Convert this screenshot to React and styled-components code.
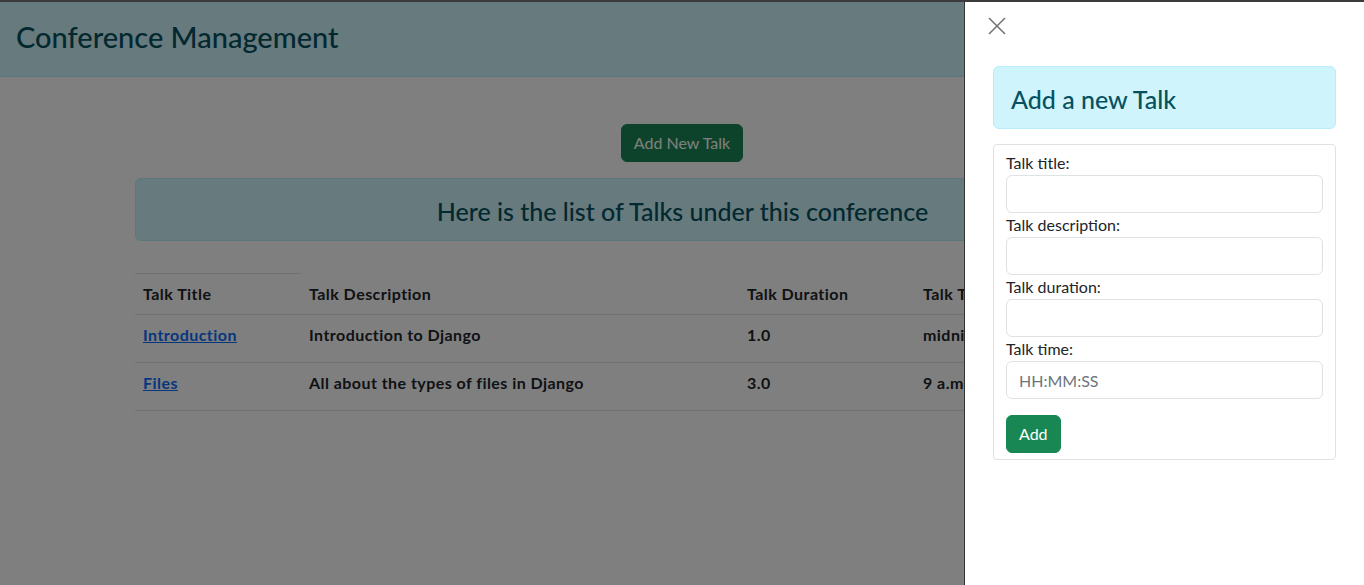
import styled, { createGlobalStyle } from "styled-components";

const GlobalStyle = createGlobalStyle`
    body {
        margin: 0;
        font-family: Lato, "Segoe UI", "Liberation Sans", sans-serif;
        font-size: 16px;
        line-height: 1.5;
        color: #212529;
        background: #fff;
    }
    * { box-sizing: border-box; }
`;

const TopLine = styled.div`
    position: fixed;
    top: 0;
    left: 0;
    right: 0;
    height: 2px;
    background: #3b3b3b;
    z-index: 30;
`;

const Header = styled.header`
    height: 77px;
    display: flex;
    align-items: center;
    padding: 0 16px 3px;
    background: #cff4fc;
    border-bottom: 1px solid #b6effb;
`;

const Brand = styled.h1`
    margin: 0;
    font-size: 29px;
    font-weight: 500;
    color: #055160;
`;

const Main = styled.main`
    width: calc(100% - 270px);
    margin: 0 auto;
    padding-top: 47px;
    display: flex;
    flex-direction: column;
    align-items: center;
`;

const Button = styled.button`
    font-family: inherit;
    font-size: 16px;
    line-height: 24px;
    color: #fff;
    background: #198754;
    border: 1px solid #198754;
    border-radius: 6px;
    padding: 6px 12px;
    cursor: pointer;
`;

const Alert = styled.div`
    width: 100%;
    background: #cff4fc;
    border: 1px solid #b6effb;
    border-radius: 6px;
    padding: 18px 16px 15px 17px;
    text-align: ${(p) => (p.center ? "center" : "left")};
    margin-top: ${(p) => p.top || 0}px;
`;

const AlertTitle = styled.h4`
    margin: 0;
    font-size: 25px;
    font-weight: 500;
    line-height: 28px;
    color: #055160;
`;

const Table = styled.table`
    width: 100%;
    margin-top: 32px;
    border-collapse: collapse;
    font-weight: 700;
    letter-spacing: 0.45px;
`;

const TopRule = styled.tr`
    th {
        height: 0;
        padding: 0;
        border-top: 1px solid #dee2e6;
    }
    th + th {
        border-top: none;
    }
`;

const Cell = styled.td`
    text-align: left;
    padding: ${(p) => (p.head ? "8px" : "8px 8px 15px")};
    border-bottom: 1px solid #dee2e6;
    width: ${(p) => p.w || "auto"};
    vertical-align: top;
`;

const TalkLink = styled.a`
    color: #0d6efd;
    text-decoration: underline;
`;

const Backdrop = styled.div`
    position: fixed;
    inset: 0;
    background: rgba(0, 0, 0, 0.5);
    z-index: 10;
`;

const Offcanvas = styled.aside`
    position: fixed;
    top: 0;
    right: 0;
    bottom: 0;
    width: 400px;
    background: #fff;
    border-left: 1px solid #333;
    z-index: 20;
    display: flex;
    flex-direction: column;
`;

const OffHeader = styled.div`
    padding: 17px 16px 0 23px;
    height: 50px;
`;

const CloseBtn = styled.button`
    border: none;
    background: none;
    padding: 0;
    width: 18px;
    height: 18px;
    display: flex;
    cursor: pointer;
`;

const OffBody = styled.div`
    padding: 16px 28px 16px 28px;
`;

const FormCard = styled.form`
    margin-top: 15px;
    border: 1px solid #dee2e6;
    border-radius: 4px;
    padding: 6px 12px 6px;
    display: flex;
    flex-direction: column;
`;

const Label = styled.label`
    display: block;
    font-size: 16px;
    line-height: 24px;
    color: #212529;
`;

const Input = styled.input`
    display: block;
    width: 100%;
    height: 38px;
    font-family: inherit;
    font-size: 16px;
    padding: 6px 12px;
    border: 1px solid #dee2e6;
    border-radius: 6px;
    color: #212529;
    &::placeholder {
        color: #6c757d;
    }
`;

const SubmitRow = styled.div`
    margin-top: 16px;
`;

const talks = [
    { title: "Introduction", desc: "Introduction to Django", duration: "1.0", time: "midnight" },
    { title: "Files", desc: "All about the types of files in Django", duration: "3.0", time: "9 a.m." },
];

const App = () => {
    return (
        <>
            <GlobalStyle />
            <TopLine />
            <Header>
                <Brand>Conference Management</Brand>
            </Header>
            <Main>
                <Button>Add New Talk</Button>
                <Alert center top={16}>
                    <AlertTitle>Here is the list of Talks under this conference</AlertTitle>
                </Alert>
                <Table>
                    <thead>
                        <TopRule>
                            <th />
                            <th />
                            <th />
                            <th />
                        </TopRule>
                        <tr>
                            <Cell as="th" head w="166px">Talk Title</Cell>
                            <Cell as="th" head w="438px">Talk Description</Cell>
                            <Cell as="th" head w="176px">Talk Duration</Cell>
                            <Cell as="th" head>Talk Time</Cell>
                        </tr>
                    </thead>
                    <tbody>
                        {talks.map((t) => (
                            <tr key={t.title}>
                                <Cell><TalkLink href="#">{t.title}</TalkLink></Cell>
                                <Cell>{t.desc}</Cell>
                                <Cell>{t.duration}</Cell>
                                <Cell>{t.time}</Cell>
                            </tr>
                        ))}
                    </tbody>
                </Table>
            </Main>
            <Backdrop />
            <Offcanvas>
                <OffHeader>
                    <CloseBtn aria-label="Close">
                        <svg width="18" height="18" viewBox="0 0 18 18">
                            <path d="M1 1L17 17M17 1L1 17" stroke="#707070" strokeWidth="1.5" />
                        </svg>
                    </CloseBtn>
                </OffHeader>
                <OffBody>
                    <Alert>
                        <AlertTitle>Add a new Talk</AlertTitle>
                    </Alert>
                    <FormCard onSubmit={(e) => e.preventDefault()}>
                        <Label>Talk title:</Label>
                        <Input type="text" />
                        <Label>Talk description:</Label>
                        <Input type="text" />
                        <Label>Talk duration:</Label>
                        <Input type="text" />
                        <Label>Talk time:</Label>
                        <Input type="text" placeholder="HH:MM:SS" />
                        <SubmitRow>
                            <Button type="submit">Add</Button>
                        </SubmitRow>
                    </FormCard>
                </OffBody>
            </Offcanvas>
        </>
    );
};

export default App;
